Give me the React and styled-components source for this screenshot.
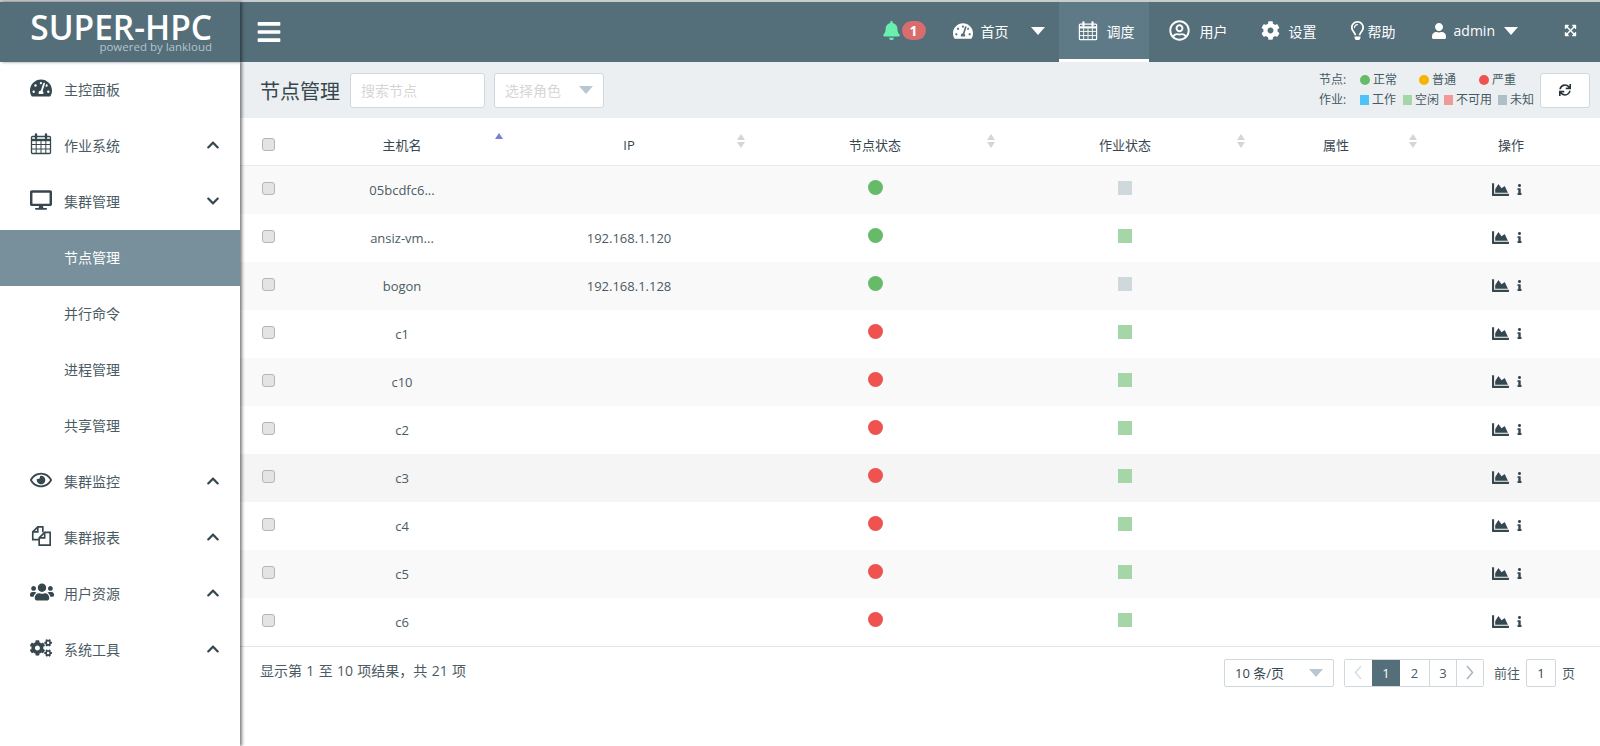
import React from 'react';
import styled, { createGlobalStyle } from 'styled-components';
import {
  FaBars,
  FaBell,
  FaChartArea,
  FaChevronDown,
  FaChevronUp,
  FaCog,
  FaCogs,
  FaDesktop,
  FaExpandArrowsAlt,
  FaInfo,
  FaRegEye,
  FaRegLightbulb,
  FaRegUserCircle,
  FaSync,
  FaTachometerAlt,
  FaUser,
  FaUsers,
} from 'react-icons/fa';

const GlobalStyle = createGlobalStyle`
  html, body {
    margin: 0;
    padding: 0;
    background: #fff;
    overflow: hidden;
  }
  body {
    font-family: "Open Sans", "Noto Sans CJK SC", sans-serif;
    font-size: 13px;
    color: #37474f;
  }
`;

const Page = styled.div`
  height: 746px;
  display: grid;
  grid-template-columns: 240px 1fr;
  grid-template-rows: 60px 1fr;
  border-top: 2px solid #c9cccd;
  box-sizing: border-box;
`;

const Brand = styled.div`
  background: #546e7a;
  color: #fff;
  padding: 11px 0 0 29px;
  position: relative;
  z-index: 2;
  box-shadow: 2px 0 3px rgba(0, 0, 0, 0.45);
`;

const BrandBox = styled.div`
  width: 183px;
  display: flex;
  flex-direction: column;
  align-items: flex-end;
`;

const BrandName = styled.div`
  font-size: 33.5px;
  font-weight: 600;
  line-height: 28px;
  white-space: nowrap;
`;

const BrandSub = styled.div`
  font-size: 11.5px;
  line-height: 11px;
  color: #b6c4ca;
`;

const TopBar = styled.header`
  background: #546e7a;
  color: #fff;
  display: flex;
  align-items: stretch;
  padding-left: 16px;
`;

const MenuButton = styled.div`
  display: flex;
  align-items: center;
  font-size: 26px;
  margin-right: auto;
`;

const TopItem = styled.div`
  height: 60px;
  box-sizing: border-box;
  display: flex;
  align-items: center;
  font-size: 14px;
  padding: ${(p) => p.$pad || '0 10px'};
  gap: ${(p) => p.$gap || '8px'};
  background: ${(p) => (p.$active ? '#5f7a87' : 'transparent')};
  border-bottom: 3px solid ${(p) => (p.$active ? '#fff' : 'transparent')};
  white-space: nowrap;
`;

const Badge = styled.span`
  width: 24px;
  height: 19px;
  border-radius: 10px;
  background: #d96c6c;
  font-size: 14px;
  font-weight: 700;
  line-height: 19px;
  text-align: center;
  margin-left: -2px;
`;

const Caret = styled.span`
  width: 0;
  height: 0;
  margin-left: ${(p) => p.$offset || 0}px;
  border-left: 7px solid transparent;
  border-right: 7px solid transparent;
  border-top: 8px solid ${(p) => p.$color || '#fff'};
`;

const Sidebar = styled.aside`
  background: #fff;
  position: relative;
  z-index: 1;
  box-shadow: 2px 0 3px rgba(0, 0, 0, 0.5);
`;

const SideItem = styled.div`
  height: 56px;
  box-sizing: border-box;
  padding: 0 0 2px ${(p) => (p.$child ? '64px' : '30px')};
  display: flex;
  align-items: center;
  font-size: 14px;
  color: ${(p) => (p.$active ? '#fff' : '#4b5b64')};
  background: ${(p) => (p.$active ? '#78909c' : 'transparent')};
`;

const SideIcon = styled.span`
  width: 34px;
  display: flex;
  font-size: ${(p) => p.$size || 22}px;
  color: #37474f;
  margin-top: -3px;
`;

const SideLabel = styled.span`
  flex: 1;
`;

const SideArrow = styled.span`
  width: 34px;
  display: flex;
  font-size: 14px;
  color: #37474f;
`;

const Main = styled.main`
  display: flex;
  flex-direction: column;
  min-width: 0;
`;

const SubBar = styled.div`
  height: 56px;
  box-sizing: border-box;
  background: #eceff1;
  display: flex;
  align-items: center;
  padding: 0 10px 0 20px;
`;

const PageTitle = styled.h1`
  margin: 0 10px 0 0;
  font-size: 20px;
  font-weight: 400;
  color: #37474f;
`;

const SearchInput = styled.input`
  width: 135px;
  height: 35px;
  box-sizing: border-box;
  border: 1px solid #cfd8dc;
  border-radius: 3px;
  padding: 0 10px;
  margin-right: 9px;
  font: 14px "Open Sans", "Noto Sans CJK SC", sans-serif;
  background: #fff;
  &::placeholder {
    color: #d6d6d6;
  }
`;

const RoleSelect = styled.div`
  width: 110px;
  height: 35px;
  box-sizing: border-box;
  border: 1px solid #cfd8dc;
  border-radius: 3px;
  background: #fff;
  padding: 0 10px;
  font-size: 14px;
  color: #d6d6d6;
  display: flex;
  align-items: center;
  justify-content: space-between;
`;

const Legend = styled.div`
  margin-left: auto;
  margin-right: 5px;
  display: flex;
  flex-direction: column;
  gap: 4px;
  font-size: 12px;
  line-height: 16px;
  color: #455a64;
`;

const LegendRow = styled.div`
  display: flex;
  align-items: center;
`;

const LegendName = styled.span`
  width: 41px;
`;

const LegendEntry = styled.span`
  display: flex;
  align-items: center;
  gap: 3px;
  margin-right: ${(p) => p.$gap || 0}px;
`;

const LegendMark = styled.i`
  width: ${(p) => (p.$round ? 10 : 9)}px;
  height: 10px;
  border-radius: ${(p) => (p.$round ? '50%' : '0')};
  background: ${(p) => p.$color};
`;

const RefreshButton = styled.button`
  width: 50px;
  height: 35px;
  border: 1px solid #cfd8dc;
  border-radius: 3px;
  background: #fff;
  color: #263238;
  font-size: 12px;
  padding: 0;
  display: flex;
  align-items: center;
  justify-content: center;
`;

const Table = styled.table`
  width: 1360px;
  table-layout: fixed;
  border-collapse: collapse;
  font-size: 13px;
`;

const HeadCell = styled.th`
  height: 47px;
  padding: 7px 0 0;
  box-sizing: border-box;
  font-weight: 400;
  text-align: center;
  color: #37474f;
  position: relative;
  border-bottom: 1px solid #e8ecee;
`;

const SortMark = styled.span`
  position: absolute;
  right: 5px;
  top: ${(p) => (p.$active ? 15 : 16)}px;
  display: flex;
  flex-direction: column;
  gap: 2px;
`;

const SortArrow = styled.i`
  width: 0;
  height: 0;
  border-left: 4.5px solid transparent;
  border-right: 4.5px solid transparent;
  ${(p) => (p.$down ? 'border-top' : 'border-bottom')}: 6px solid ${(p) => p.$color};
`;

const Row = styled.tr`
  background: ${(p) => (p.$hover ? '#f5f5f5' : p.$odd ? '#f9f9f9' : '#fff')};
`;

const Cell = styled.td`
  height: 48px;
  padding: 0;
  text-align: center;
  color: #4b5b64;
`;

const CheckBox = styled.input.attrs({ type: 'checkbox' })`
  appearance: none;
  width: 13px;
  height: 13px;
  margin: 0 0 ${(p) => (p.$head ? 3 : 4)}px;
  border: 1px solid #b5b5b5;
  border-radius: 3px;
  background: #e4e4e4;
  vertical-align: middle;
`;

const Dot = styled.span`
  display: inline-block;
  width: 15px;
  height: 15px;
  margin-bottom: 5px;
  border-radius: 50%;
  background: ${(p) => p.$color};
  vertical-align: middle;
`;

const Square = styled.span`
  display: inline-block;
  width: 14px;
  height: 14px;
  margin-bottom: 5px;
  background: ${(p) => p.$color};
  vertical-align: middle;
`;

const Actions = styled.div`
  display: flex;
  justify-content: center;
  align-items: center;
  gap: 5px;
  color: #37474f;
  font-size: 15px;
  padding-right: 5px;
`;

const Footer = styled.div`
  border-top: 1px solid #dfe6ea;
  display: flex;
  align-items: center;
  padding: 12px 25px 0 20px;
`;

const FooterInfo = styled.span`
  margin-right: auto;
  color: #4b5b64;
  font-size: 14px;
  word-spacing: 0.7px;
  padding-bottom: 6px;
`;

const PageSize = styled.div`
  width: 110px;
  height: 28px;
  box-sizing: border-box;
  border: 1px solid #cfd8dc;
  border-radius: 2px;
  padding: 0 10px;
  margin-right: 10px;
  display: flex;
  align-items: center;
  justify-content: space-between;
`;

const Pager = styled.div`
  display: flex;
  height: 28px;
  box-sizing: border-box;
  border: 1px solid #cfd8dc;
  border-radius: 2px;
`;

const PagerCell = styled.span`
  width: ${(p) => p.$w || 28}px;
  box-sizing: border-box;
  display: flex;
  align-items: center;
  justify-content: center;
  background: ${(p) => (p.$active ? '#546e7a' : '#fff')};
  color: ${(p) => (p.$active ? '#fff' : p.$muted || '#4b5b64')};
  border-left: ${(p) => (p.$first || p.$active ? '0' : '1px solid #cfd8dc')};
`;

const GotoText = styled.span`
  margin: ${(p) => (p.$last ? '0 0 0 6px' : '0 6px 0 10px')};
  color: #4b5b64;
`;

const GotoBox = styled.span`
  width: 30px;
  height: 28px;
  box-sizing: border-box;
  border: 1px solid #cfd8dc;
  border-radius: 2px;
  display: flex;
  align-items: center;
  justify-content: center;
`;

const CalendarIcon = ({ size = 22 }) => (
  <svg width={size} height={size} viewBox="0 0 22 22" fill="none" stroke="currentColor">
    <rect x="1.5" y="3.5" width="19" height="17" rx="1" strokeWidth="1.3" />
    <path d="M1.5 7h19" strokeWidth="2.4" />
    <path d="M1.5 11.5h19M1.5 16h19M6.2 8v12M11 8v12M15.8 8v12" strokeWidth="1" />
    <path d="M6 1.5v3.5M16 1.5v3.5" strokeWidth="2.4" strokeLinecap="round" />
  </svg>
);

const FilesIcon = () => (
  <svg width="22" height="22" viewBox="0 0 24 24" fill="none" stroke="currentColor" strokeWidth="1.8">
    <path d="M10 16H3V7.5L8.5 2H14V8" />
    <path d="M8.5 2V7.5H3" />
    <path d="M16 8H22V22H10V14L16 8Z" />
    <path d="M16 8V14H10" />
  </svg>
);

const Chevron = ({ left }) => (
  <svg width="8" height="15" viewBox="0 0 8 15" fill="none" stroke="currentColor" strokeWidth="1.5">
    <path d={left ? 'M7 1L1.5 7.5L7 14' : 'M1 1L6.5 7.5L1 14'} />
  </svg>
);

const sideItems = [
  { label: '主控面板', icon: <FaTachometerAlt /> },
  { label: '作业系统', icon: <CalendarIcon />, arrow: 'up' },
  { label: '集群管理', icon: <FaDesktop />, arrow: 'down' },
  { label: '节点管理', child: true, active: true },
  { label: '并行命令', child: true },
  { label: '进程管理', child: true },
  { label: '共享管理', child: true },
  { label: '集群监控', icon: <FaRegEye />, arrow: 'up' },
  { label: '集群报表', icon: <FilesIcon />, arrow: 'up' },
  { label: '用户资源', icon: <FaUsers />, size: 24, arrow: 'up' },
  { label: '系统工具', icon: <FaCogs />, arrow: 'up' },
];

const columns = [
  { width: 56 },
  { width: 212, title: '主机名', sort: 'asc' },
  { width: 242, title: 'IP', sort: 'none' },
  { width: 250, title: '节点状态', sort: 'none' },
  { width: 250, title: '作业状态', sort: 'none' },
  { width: 172, title: '属性', sort: 'none' },
  { width: 178, title: '操作' },
];

const GREEN = '#66bb6a';
const RED = '#ef5350';
const IDLE = '#a5d6a7';
const UNKNOWN = '#cfd8dc';

const nodes = [
  { name: '05bcdfc6...', ip: '', node: GREEN, job: UNKNOWN },
  { name: 'ansiz-vm...', ip: '192.168.1.120', node: GREEN, job: IDLE },
  { name: 'bogon', ip: '192.168.1.128', node: GREEN, job: UNKNOWN },
  { name: 'c1', ip: '', node: RED, job: IDLE },
  { name: 'c10', ip: '', node: RED, job: IDLE },
  { name: 'c2', ip: '', node: RED, job: IDLE },
  { name: 'c3', ip: '', node: RED, job: IDLE, hover: true },
  { name: 'c4', ip: '', node: RED, job: IDLE },
  { name: 'c5', ip: '', node: RED, job: IDLE },
  { name: 'c6', ip: '', node: RED, job: IDLE },
];

const App = () => (
  <Page>
    <GlobalStyle />
    <Brand>
      <BrandBox>
        <BrandName>SUPER-HPC</BrandName>
        <BrandSub>powered by lankloud</BrandSub>
      </BrandBox>
    </Brand>
    <TopBar>
      <MenuButton>
        <FaBars />
      </MenuButton>
      <TopItem $gap="3px" $pad="0 13px 0 0">
        <FaBell color="#69f0ae" size={19} />
        <Badge>1</Badge>
      </TopItem>
      <TopItem $pad="0 14px 0 14px" $gap="8px">
        <FaTachometerAlt size={20} />
        <span>首页</span>
        <Caret $offset={14} />
      </TopItem>
      <TopItem $active $pad="0 14px 0 19px" $gap="9px">
        <CalendarIcon size={20} />
        <span>调度</span>
      </TopItem>
      <TopItem $pad="0 0 0 20px" $gap="10px">
        <FaRegUserCircle size={21} />
        <span>用户</span>
      </TopItem>
      <TopItem $pad="0 0 0 33px" $gap="9px">
        <FaCog size={19} />
        <span>设置</span>
      </TopItem>
      <TopItem $pad="0 0 0 31px" $gap="1px">
        <FaRegLightbulb size={19} />
        <span>帮助</span>
      </TopItem>
      <TopItem $pad="0 26px 0 35px" $gap="7px">
        <FaUser size={16} />
        <span>admin</span>
        <Caret $offset={2} />
      </TopItem>
      <TopItem $pad="0 23px 0 20px">
        <FaExpandArrowsAlt size={13} />
      </TopItem>
    </TopBar>
    <Sidebar>
      {sideItems.map((item) => (
        <SideItem key={item.label} $child={item.child} $active={item.active}>
          {item.icon && <SideIcon $size={item.size}>{item.icon}</SideIcon>}
          <SideLabel>{item.label}</SideLabel>
          {item.arrow && (
            <SideArrow>{item.arrow === 'up' ? <FaChevronUp /> : <FaChevronDown />}</SideArrow>
          )}
        </SideItem>
      ))}
    </Sidebar>
    <Main>
      <SubBar>
        <PageTitle>节点管理</PageTitle>
        <SearchInput placeholder="搜索节点" />
        <RoleSelect>
          <span>选择角色</span>
          <Caret $color="#b8c7d0" />
        </RoleSelect>
        <Legend>
          <LegendRow>
            <LegendName>节点:</LegendName>
            <LegendEntry $gap={22}>
              <LegendMark $round $color={GREEN} />
              正常
            </LegendEntry>
            <LegendEntry $gap={23}>
              <LegendMark $round $color="#f4b400" />
              普通
            </LegendEntry>
            <LegendEntry $gap={19}>
              <LegendMark $round $color={RED} />
              严重
            </LegendEntry>
          </LegendRow>
          <LegendRow>
            <LegendName>作业:</LegendName>
            <LegendEntry $gap={7}>
              <LegendMark $color="#4fc3f7" />
              工作
            </LegendEntry>
            <LegendEntry $gap={5}>
              <LegendMark $color={IDLE} />
              空闲
            </LegendEntry>
            <LegendEntry $gap={6}>
              <LegendMark $color="#ef9a9a" />
              不可用
            </LegendEntry>
            <LegendEntry>
              <LegendMark $color="#b0bec5" />
              未知
            </LegendEntry>
          </LegendRow>
        </Legend>
        <RefreshButton>
          <FaSync />
        </RefreshButton>
      </SubBar>
      <Table>
        <colgroup>
          {columns.map((col, i) => (
            <col key={i} width={col.width} />
          ))}
        </colgroup>
        <thead>
          <tr>
            {columns.map((col, i) => (
              <HeadCell key={i}>
                {col.title || (i === 0 && <CheckBox $head />)}
                {col.sort && (
                  <SortMark $active={col.sort === 'asc'}>
                    <SortArrow $color={col.sort === 'asc' ? '#7c7fd6' : '#d5d5d5'} />
                    <SortArrow $down $color={col.sort === 'asc' ? 'transparent' : '#d5d5d5'} />
                  </SortMark>
                )}
              </HeadCell>
            ))}
          </tr>
        </thead>
        <tbody>
          {nodes.map((n, i) => (
            <Row key={n.name} $odd={i % 2 === 0} $hover={n.hover}>
              <Cell>
                <CheckBox />
              </Cell>
              <Cell>{n.name}</Cell>
              <Cell>{n.ip}</Cell>
              <Cell>
                <Dot $color={n.node} />
              </Cell>
              <Cell>
                <Square $color={n.job} />
              </Cell>
              <Cell />
              <Cell>
                <Actions>
                  <FaChartArea size={17} />
                  <FaInfo size={11} />
                </Actions>
              </Cell>
            </Row>
          ))}
        </tbody>
      </Table>
      <Footer>
        <FooterInfo>显示第 1 至 10 项结果，共 21 项</FooterInfo>
        <PageSize>
          <span>10 条/页</span>
          <Caret $color="#b8c7d0" />
        </PageSize>
        <Pager>
          <PagerCell $first $muted="#dcdcdc" $w={27}>
            <Chevron left />
          </PagerCell>
          <PagerCell $active>1</PagerCell>
          <PagerCell $first $w={29}>2</PagerCell>
          <PagerCell $w={27}>3</PagerCell>
          <PagerCell $muted="#a9b4ba" $w={27}>
            <Chevron />
          </PagerCell>
        </Pager>
        <GotoText>前往</GotoText>
        <GotoBox>1</GotoBox>
        <GotoText $last>页</GotoText>
      </Footer>
    </Main>
  </Page>
);

export default App;
